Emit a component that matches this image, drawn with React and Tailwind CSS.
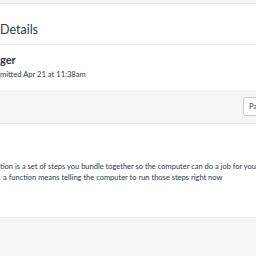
export default function App() {
  return (
    <div className="w-[256px] h-[256px] overflow-hidden bg-white text-[#2d3b45] font-['Lato','Liberation_Sans',sans-serif]">
      <div className="h-[4px] bg-[#f5f5f5] border-b border-[#e8eaec]" />
      <div className="h-[41px] flex items-end pb-[8px] border-b border-[#e8eaec]">
        <h1 className="text-[12.5px] leading-none whitespace-nowrap">Details</h1>
      </div>
      <div className="h-[45px] pt-[9px]">
        <div className="text-[11px] font-bold leading-none whitespace-nowrap">ger</div>
        <div className="mt-[6px] text-[7.6px] leading-none whitespace-nowrap">mitted Apr 21 at 11:38am</div>
      </div>
      <div className="h-[34px] bg-[#f5f5f5] border-b border-[#e8eaec] flex items-center justify-end">
        <button className="shrink-0 w-[60px] h-[19px] mr-[-47px] px-[5px] bg-white border border-[#c7cdd1] rounded-[3px] text-[7.5px] leading-none whitespace-nowrap text-left overflow-hidden">
          Past
        </button>
      </div>
      <div className="h-[93px] pt-[37px] text-[7.5px] leading-[11px] whitespace-nowrap">
        <p>tion is a set of steps you bundle together so the computer can do a job for you</p>
        <p className="pl-[3px]">a function means telling the computer to run those steps right now</p>
      </div>
      <div className="h-[40px] bg-[#f5f5f5] border-t border-[#e8eaec]" />
    </div>
  )
}
